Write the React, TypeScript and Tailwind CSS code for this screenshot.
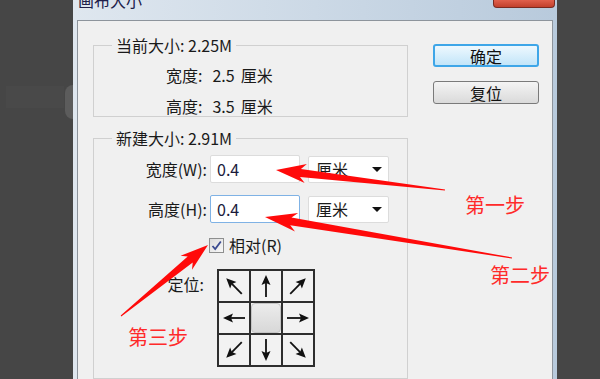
import React from 'react'

type Pt = [number, number]

// tapered annotation arrow: head at tip, shaft thinning toward tail
function arrowPoints(tip: Pt, tail: Pt, headLen: number, headW: number, shaft0: number, shaft1: number) {
  const dx = tail[0] - tip[0]
  const dy = tail[1] - tip[1]
  const len = Math.hypot(dx, dy)
  const d: Pt = [dx / len, dy / len]
  const n: Pt = [-d[1], d[0]]
  const at = (t: number, w: number): Pt => [tip[0] + d[0] * t + n[0] * w, tip[1] + d[1] * t + n[1] * w]
  const pts: Pt[] = [
    tip,
    at(headLen, headW / 2),
    at(headLen * 0.82, shaft0 / 2),
    at(len, shaft1 / 2),
    at(len, -shaft1 / 2),
    at(headLen * 0.82, -shaft0 / 2),
    at(headLen, -headW / 2),
  ]
  return pts.map((p) => p.map((v) => v.toFixed(1)).join(',')).join(' ')
}

const annotations = [
  { tip: [276, 170] as Pt, tail: [445, 190] as Pt, headLen: 30, headW: 19, s0: 8, s1: 1 },
  { tip: [265, 217] as Pt, tail: [512, 258] as Pt, headLen: 32, headW: 19, s0: 8, s1: 1 },
  { tip: [208, 245] as Pt, tail: [121, 316] as Pt, headLen: 28, headW: 18, s0: 8, s1: 1 },
]

// anchor cell arrows, rotation in degrees (0 = up)
const anchorCells: (number | null)[] = [-45, 0, 45, -90, null, 90, -135, 180, 135]

function CellArrow({ deg }: { deg: number }) {
  return (
    <svg width="30" height="30" viewBox="0 0 30 30">
      <g transform={`rotate(${deg} 15 15)`}>
        <line x1="15" y1="26" x2="15" y2="10" stroke="#111" strokeWidth="1.8" />
        <path d="M15 4 L19.5 14 L15 12 L10.5 14 Z" fill="#111" />
      </g>
    </svg>
  )
}

const cjk = "font-['Microsoft_YaHei','Noto_Sans_CJK_SC',sans-serif]"

export default function App() {
  return (
    <div className={`relative w-[600px] h-[379px] overflow-hidden bg-[#464646] flex ${cjk}`}>
      {/* background behind the dialog */}
      <div className="w-[73px] shrink-0 relative">
        <div className="absolute left-[6px] top-[86px] w-[58px] h-[22px] bg-[#494949]" />
        <div className="absolute left-[65px] top-[85px] w-[8px] h-[34px] rounded-l-full bg-[#5c5c5c]" />
      </div>

      {/* dialog window */}
      <div className="w-[484px] shrink-0 flex flex-col bg-gradient-to-r from-[#dfe7ef] via-[#ccd9e6] to-[#b8cadc]">
        {/* title bar */}
        <div className="h-[20px] flex justify-between items-start overflow-hidden">
          <div className="pl-[5px] -mt-[10px] text-[16px] leading-[20px] text-[#20204a]">画布大小</div>
          <div className="mr-[2px] w-[62px] h-[8px] rounded-b-[4px] border border-t-0 border-[#7a2a20] bg-gradient-to-b from-[#e0604c] to-[#c2402c]" />
        </div>

        {/* body */}
        <div className="flex-1 ml-[4px] mr-[4px] border-t border-l border-r border-[#8d949c] bg-[#f0f0f0] overflow-hidden flex pl-[15px] pt-[14px] text-[16px] leading-[20px] text-[#1a1a1a]">
          {/* left column */}
          <div className="w-[315px] shrink-0 flex flex-col">
            <fieldset className="border border-[#d0d0d0] h-[90px]">
              <legend className="ml-[18px] px-[4px]">当前大小: 2.25M</legend>
              <div className="pl-[72px] pt-[10px] flex flex-col gap-[11px]">
                <div className="flex">
                  <span>宽度:</span>
                  <span className="ml-[10px]">2.5</span>
                  <span className="ml-[6px]">厘米</span>
                </div>
                <div className="flex">
                  <span>高度:</span>
                  <span className="ml-[10px]">3.5</span>
                  <span className="ml-[6px]">厘米</span>
                </div>
              </div>
            </fieldset>

            <fieldset className="mt-[11px] border border-[#d0d0d0] h-[300px]">
              <legend className="ml-[18px] px-[4px]">新建大小: 2.91M</legend>
              <div className="pt-[7px] flex flex-col">
                <div className="flex items-center">
                  <div className="w-[113px] text-right">宽度(W):</div>
                  <div className="ml-[3px] w-[90px] h-[28px] bg-white border border-[#dcdcdc] rounded-[2px] pl-[6px] flex items-center text-[16px] text-[#1a1a3a]">0.4</div>
                  <div className="ml-[8px] w-[81px] h-[27px] bg-white border border-[#dcdcdc] rounded-[2px] pl-[7px] pr-[6px] flex items-center justify-between">
                    <span>厘米</span>
                    <span className="w-0 h-0 border-x-[5px] border-x-transparent border-t-[5px] border-t-[#111]" />
                  </div>
                </div>
                <div className="mt-[12px] flex items-center">
                  <div className="w-[113px] text-right">高度(H):</div>
                  <div className="ml-[3px] w-[90px] h-[28px] bg-white border border-[#7fb2e5] rounded-[2px] pl-[6px] flex items-center text-[16px] text-[#1a1a3a]">0.4</div>
                  <div className="ml-[8px] w-[81px] h-[27px] bg-white border border-[#dcdcdc] rounded-[2px] pl-[7px] pr-[6px] flex items-center justify-between">
                    <span>厘米</span>
                    <span className="w-0 h-0 border-x-[5px] border-x-transparent border-t-[5px] border-t-[#111]" />
                  </div>
                </div>
                <div className="mt-[12px] flex items-center pl-[115px]">
                  <div className="w-[15px] h-[15px] border border-[#8e8f8f] bg-gradient-to-br from-[#dcdcdc] to-[#f8f8f8] flex items-center justify-center">
                    <svg width="11" height="11" viewBox="0 0 11 11">
                      <path d="M1.5 6 L4.2 9 L9.8 1.5" fill="none" stroke="#3a4a90" strokeWidth="1.8" />
                    </svg>
                  </div>
                  <span className="ml-[5px]">相对(R)</span>
                </div>
                <div className="mt-[14px] flex items-start">
                  <div className="w-[110px] text-right pt-[5px]">定位:</div>
                  <div className="ml-[13px] grid grid-cols-3 gap-[2px] p-[2px] bg-[#2e2e2e]">
                    {anchorCells.map((deg, i) => (
                      <div key={i} className="w-[30px] h-[30px] bg-[#f2f2f2] flex items-center justify-center">
                        {deg === null ? (
                          <div className="w-[30px] h-[30px] rounded-[4px] border border-[#c4c4c4] bg-gradient-to-b from-[#ececec] to-[#d8d8d8]" />
                        ) : (
                          <CellArrow deg={deg} />
                        )}
                      </div>
                    ))}
                  </div>
                </div>
              </div>
            </fieldset>
          </div>

          {/* right column buttons */}
          <div className="ml-[25px] pt-[9px] flex flex-col gap-[14px]">
            <button className="w-[106px] h-[23px] rounded-[3px] border-2 border-[#3ea6e8] bg-gradient-to-b from-[#eef8fe] to-[#c2e5f9] flex items-center justify-center text-[16px] text-[#111]">
              确定
            </button>
            <button className="w-[106px] h-[23px] rounded-[3px] border border-[#7a7a7a] bg-gradient-to-b from-[#f4f4f4] to-[#dadada] flex items-center justify-center text-[16px] text-[#111]">
              复位
            </button>
          </div>
        </div>
      </div>

      <div className="flex-1 bg-[#464646]" />

      {/* red annotations */}
      <svg className="absolute inset-0 pointer-events-none" width="600" height="379">
        {annotations.map((a, i) => (
          <polygon key={i} points={arrowPoints(a.tip, a.tail, a.headLen, a.headW, a.s0, a.s1)} fill="#ff0a0a" />
        ))}
      </svg>
      <div className="absolute left-[465px] top-[192px] text-[20px] leading-[26px] text-[#ff2a2a]">第一步</div>
      <div className="absolute left-[490px] top-[262px] text-[20px] leading-[26px] text-[#ff2a2a]">第二步</div>
      <div className="absolute left-[128px] top-[324px] text-[20px] leading-[26px] text-[#ff2a2a]">第三步</div>
    </div>
  )
}
